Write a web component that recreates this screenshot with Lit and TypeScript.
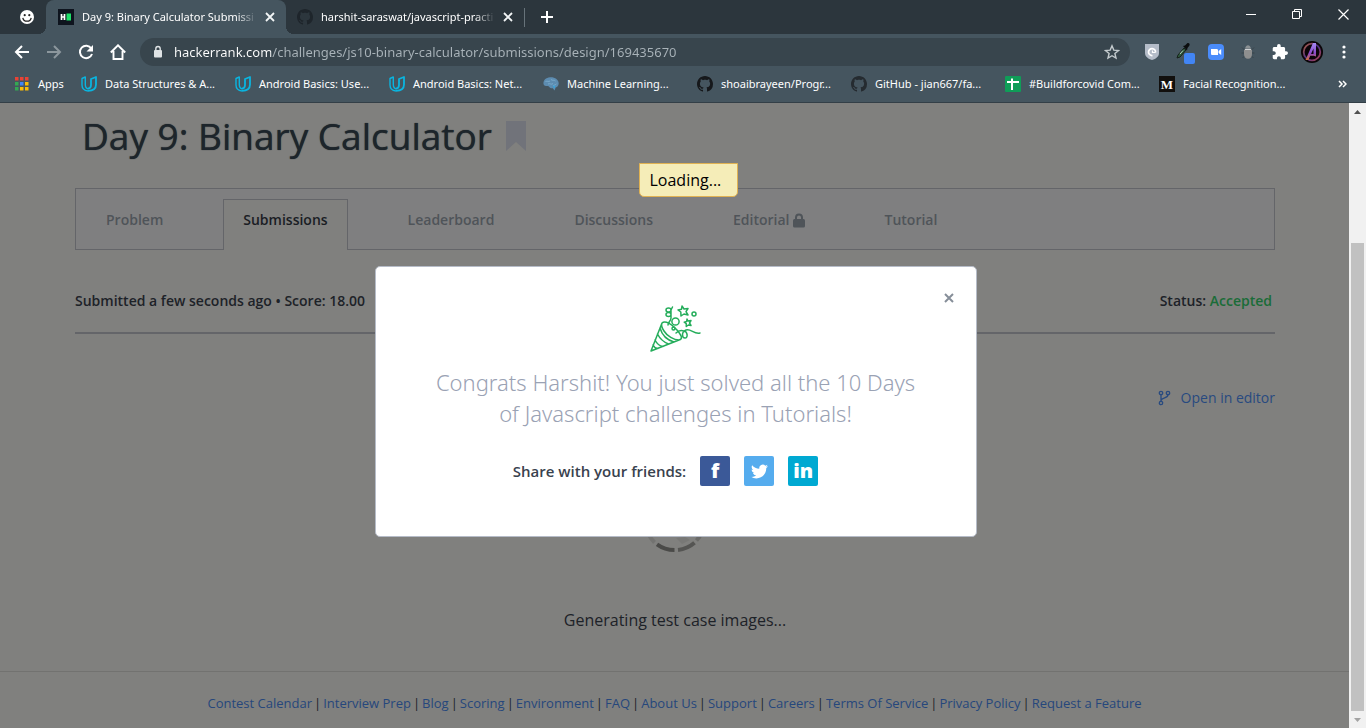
import { LitElement, html, css, svg } from "lit";
import { customElement } from "lit/decorators.js";

const GITHUB =
  "M8 0C3.58 0 0 3.58 0 8c0 3.54 2.29 6.53 5.47 7.59.4.07.55-.17.55-.38 0-.19-.01-.82-.01-1.49-2.01.37-2.53-.49-2.69-.94-.09-.23-.48-.94-.82-1.13-.28-.15-.68-.52-.01-.53.63-.01 1.08.58 1.23.82.72 1.21 1.87.87 2.33.66.07-.52.28-.87.51-1.07-1.78-.2-3.64-.89-3.64-3.95 0-.87.31-1.59.82-2.15-.08-.2-.36-1.02.08-2.12 0 0 .67-.21 2.2.82.64-.18 1.32-.27 2-.27s1.36.09 2 .27c1.53-1.04 2.2-.82 2.2-.82.44 1.1.16 1.92.08 2.12.51.56.82 1.27.82 2.15 0 3.07-1.87 3.75-3.65 3.95.29.25.54.73.54 1.48 0 1.07-.01 1.93-.01 2.2 0 .21.15.46.55.38A8.01 8.01 0 0 0 16 8c0-4.42-3.58-8-8-8z";

const github = (fill: string) =>
  html`<svg width="16" height="16" viewBox="0 0 16 16" aria-hidden="true"><path fill=${fill} d=${GITHUB} /></svg>`;

const udacity = html`<svg width="16" height="16" viewBox="0 0 16 16" aria-hidden="true">
  <path d="M7 15C3 14.500 1 12.500 1 9V2.500L4.300 1v7.500c0 2.500 1 4 3 4.500" fill="none" stroke="#0ab5e0" stroke-width="1.400" stroke-linejoin="round" />
  <path d="M7 12.700c2.200-.3 3-1.700 3-3.700V3l5-2v7.500c0 3.800-2.500 6.200-8 6.400" fill="none" stroke="#0ab5e0" stroke-width="1.800" stroke-linejoin="round" />
</svg>`;

const brain = html`<svg width="16" height="16" viewBox="0 0 16 16" aria-hidden="true">
  <path d="M.5 8C0 4.500 3 1.500 7 1.300c5-.3 8.700 2.500 8.700 6 0 2.400-1.200 3.800-3 4.200l-1.200 3-1.700-2.300C6 12.500 6.500 10 4.500 10 2.500 10 .8 9.700.5 8z" fill="#5d8cb0" />
  <path d="M2.500 5.500c2-.8 3 .6 4.500-.5M5 8c2-1 3 1 5-.4M8 3.500c1.500 1.500 3 0 4.500 1.500M10 10c1-1.500 2.500-.5 3.500-2.300" fill="none" stroke="#7fb0d0" stroke-width=".8" />
  <path d="M9.500 9.500l2 3 .8-2.500z" fill="#35a5dc" />
</svg>`;

const sheets = html`<svg width="16" height="16" viewBox="0 0 16 16" aria-hidden="true">
  <rect width="16" height="16" rx="1" fill="#0f9d58" />
  <path d="M2 6h12M7 2.500v11.500" stroke="#fff" stroke-width="2" />
</svg>`;

const medium = html`<svg width="16" height="16" viewBox="0 0 16 16" aria-hidden="true">
  <rect width="16" height="16" fill="#12100e" />
  <text x="8" y="12.500" text-anchor="middle" font-family="Liberation Serif, serif" font-weight="700" font-size="13" fill="#fff">M</text>
</svg>`;

const BOOKMARKS = [
  { icon: udacity, label: "Data Structures & A..." },
  { icon: udacity, label: "Android Basics: Use..." },
  { icon: udacity, label: "Android Basics: Net..." },
  { icon: brain, label: "Machine Learning..." },
  { icon: github("#16181b"), label: "shoaibrayeen/Progr..." },
  { icon: github("#252b30"), label: "GitHub - jian667/fa..." },
  { icon: sheets, label: "#Buildforcovid Com..." },
  { icon: medium, label: "Facial Recognition..." },
];

const closeGlyph = html`<svg width="10" height="10" viewBox="0 0 10 10" aria-hidden="true"><path d="M1 1l8 8M9 1l-8 8" stroke="#f2f5f6" stroke-width="1.800" /></svg>`;

@customElement("browser-chrome")
export class BrowserChrome extends LitElement {
  static styles = css`
    :host { display: block; font: 11px/16px "Noto Sans", "Open Sans", sans-serif; color: #fff; background: #45555f; border-bottom: 1px solid #333f47; }
    button { appearance: none; border: 0; background: none; padding: 0; color: inherit; font: inherit; display: grid; place-items: center; flex: none; }
    a { color: inherit; text-decoration: none; }
    svg { display: block; flex: none; }
    .strip { display: flex; height: 34px; background: #2c363d; }
    .pinned { width: 46px; padding-left: 8px; display: grid; place-items: center; box-sizing: border-box; }
    .tab { position: relative; width: 240px; box-sizing: border-box; padding: 0 11px 0 12px; display: flex; align-items: center; gap: 8px; }
    .tab.active { background: #45555f; border-radius: 8px 8px 0 0; }
    .tab.active::before, .tab.active::after { content: ""; position: absolute; bottom: 0; width: 8px; height: 8px; }
    .tab.active::before { right: 100%; background: radial-gradient(circle at 0 0, transparent 8px, #45555f 8px); }
    .tab.active::after { left: 100%; background: radial-gradient(circle at 100% 0, transparent 8px, #45555f 8px); }
    .title { flex: 1; min-width: 0; white-space: nowrap; mask-image: linear-gradient(to right, #000 88%, transparent); -webkit-mask-image: linear-gradient(to right, #000 88%, transparent); }
    .second { padding-left: 11px; width: 238px; }
    .divider { width: 1px; height: 19px; margin-top: 8px; background: #67737a; }
    .plus { width: 44px; }
    .window { margin-left: auto; display: flex; height: 28px; }
    .window button { width: 46px; }
    .toolbar { display: flex; align-items: center; padding: 4px 6px; }
    .tool { width: 32px; height: 28px; }
    .omnibox { flex: 1; min-width: 0; display: flex; align-items: center; height: 28px; border-radius: 14px; background: #38454d; margin: 0 6px; padding: 0 10px 0 12px; gap: 10px; }
    .url { flex: 1; min-width: 0; border: 0; outline: 0; padding: 0; height: 20px; font: 13px/20px "Noto Sans", "Open Sans", sans-serif; color: transparent; background: linear-gradient(to right, #fff 97px, #a9b3b9 97px); -webkit-background-clip: text; background-clip: text; }
    .bookmarks { display: flex; align-items: center; height: 28px; padding: 0 19px 4px 15px; overflow: hidden; }
    .bookmark { display: flex; align-items: center; gap: 8px; width: 154px; white-space: nowrap; flex: none; }
    .bookmark.apps { width: 66px; gap: 9px; }
    .more { margin-left: auto; }
  `;
  render() {
    const dots = ["#ea4335", "#ea4335", "#ea4335", "#34a853", "#4285f4", "#fbbc05", "#34a853", "#fbbc05", "#fbbc05"];
    return html`
      <div class="strip">
        <div class="pinned">
          <svg width="14" height="14" viewBox="0 0 14 14" aria-hidden="true"><circle cx="7" cy="7" r="7" fill="#fff" /><circle cx="4.700" cy="5.200" r="1.100" fill="#222" /><circle cx="9.300" cy="5.200" r="1.100" fill="#222" /><path d="M2.800 7.800a4.300 4.300 0 0 0 8.400 0" fill="none" stroke="#222" stroke-width="1.300" /></svg>
        </div>
        <div class="tab active">
          <svg width="16" height="16" viewBox="0 0 16 16" aria-hidden="true"><rect width="16" height="16" fill="#0e141e" /><path d="M3.500 5v6M6.500 5v6M3 8h4" stroke="#fff" stroke-width="1.700" /><rect x="8.500" y="4.500" width="4.500" height="7" fill="#1fe06a" /></svg>
          <span class="title">Day 9: Binary Calculator Submissi</span>
          <button aria-label="Close tab">${closeGlyph}</button>
        </div>
        <div class="tab second">
          ${github("#1e252b")}
          <span class="title">harshit-saraswat/javascript-practi</span>
          <button aria-label="Close tab">${closeGlyph}</button>
        </div>
        <span class="divider"></span>
        <button class="plus" aria-label="New tab"><svg width="12" height="12" viewBox="0 0 12 12"><path d="M6 0v12M0 6h12" stroke="#fff" stroke-width="2" /></svg></button>
        <div class="window">
          <button aria-label="Minimize"><svg width="10" height="10" viewBox="0 0 10 10"><path d="M0 5.500h10" stroke="#fff" /></svg></button>
          <button aria-label="Restore"><svg width="10" height="10" viewBox="0 0 10 10"><path d="M.5 2.500h7v7h-7zM2.500 2.500v-2h7v7h-2" fill="none" stroke="#fff" /></svg></button>
          <button aria-label="Close"><svg width="11" height="11" viewBox="0 0 11 11"><path d="M.5.5l10 10M10.500.5l-10 10" stroke="#fff" stroke-width="1.200" /></svg></button>
        </div>
      </div>
      <div class="toolbar">
        <button class="tool" aria-label="Back"><svg width="16" height="16" viewBox="0 0 16 16"><path d="M15 8H2M8 2L2 8l6 6" fill="none" stroke="#fff" stroke-width="2" /></svg></button>
        <button class="tool" aria-label="Forward"><svg width="16" height="16" viewBox="0 0 16 16"><path d="M1 8h13M8 2l6 6-6 6" fill="none" stroke="#8c979d" stroke-width="2" /></svg></button>
        <button class="tool" aria-label="Reload"><svg width="16" height="16" viewBox="0 0 16 16"><path d="M13.300 4.500A6.200 6.200 0 1 0 14 10" fill="none" stroke="#fff" stroke-width="2" /><path d="M15 1v6.500H8.500z" fill="#fff" /></svg></button>
        <button class="tool" aria-label="Home"><svg width="16" height="16" viewBox="0 0 16 16"><path d="M.8 8.500L8 1.300l7.200 7.200M3.500 7v8h9V7" fill="none" stroke="#fff" stroke-width="1.900" /></svg></button>
        <div class="omnibox">
          <svg width="12" height="14" viewBox="0 0 12 14" aria-hidden="true"><rect x="2" y="5" width="8" height="7.500" rx="1" fill="#dfe3e5" /><path d="M3.800 5.500V3.700a2.200 2.200 0 0 1 4.400 0v1.800" fill="none" stroke="#dfe3e5" stroke-width="1.400" /></svg>
          <input class="url" aria-label="Address" spellcheck="false" value="hackerrank.com/challenges/js10-binary-calculator/submissions/design/169435670" />
          <button aria-label="Bookmark this page"><svg width="16" height="16" viewBox="0 0 16 16"><path d="M8 1.800l1.800 4.300 4.700.4-3.600 3 1.100 4.600L8 11.700l-4 2.400 1.100-4.600-3.600-3 4.700-.4z" fill="none" stroke="#c3cacd" stroke-width="1.400" /></svg></button>
        </div>
        <button class="tool" aria-label="Shield"><svg width="14" height="16" viewBox="0 0 14 16"><path d="M0 0h14v9c0 3.500-3 5.800-7 7-4-1.200-7-3.500-7-7z" fill="#b4bcc8" /><path d="M10.500 8.500a3.500 3.500 0 1 0-3 3" fill="none" stroke="#fff" stroke-width="1.700" /><path d="M10.500 8.500H7.500V6.500" fill="none" stroke="#fff" stroke-width="1.200" /></svg></button>
        <button class="tool" aria-label="Colour picker"><svg width="22" height="24" viewBox="0 0 22 24"><path d="M4 18l1-3 6-7 2 2-6 7z" fill="#2f5a3e" stroke="#16211a" /><path d="M7 14l3-3.500" stroke="#b9d6bf" /><path d="M10 6l2-.5L14 3.500c1.500-1.200 3.500.5 2.300 2.200L14.500 8l-.5 2.500z" fill="#0b0d0e" /><rect x="11" y="13" width="11" height="11" rx="2" fill="#4285f4" /></svg></button>
        <button class="tool" aria-label="Video meeting"><svg width="16" height="16" viewBox="0 0 16 16"><rect width="16" height="16" rx="4" fill="#4a8cfb" /><path d="M3 5h5.500c1 0 1.500.5 1.500 1.500V11H4.500C3.500 11 3 10.500 3 9.500zM10.600 7.100L13.200 5v6l-2.600-2z" fill="#fff" /></svg></button>
        <button class="tool" aria-label="Debugger"><svg width="16" height="16" viewBox="0 0 16 16"><path d="M2 3.500l3 3M14 3.500l-3 3M1.500 9H4M14.500 9H12M2.500 14l2-2M13.500 14l-2-2" stroke="#39444a" stroke-width="1" /><path d="M5.200 4.800C5.200 0 10.800 0 10.800 4.800z" fill="#8b9194" /><path d="M4 6h8v4c0 3-1.500 4.800-4 4.800S4 13 4 10z" fill="#8e8f8f" /><path d="M4.800 5.500h6.400" stroke="#d0d2d3" /></svg></button>
        <button class="tool" aria-label="Extensions"><svg width="16" height="16" viewBox="1 1 22 22"><path d="M20.500 11H19V7c0-1.100-.9-2-2-2h-4V3.500a2.500 2.500 0 0 0-5 0V5H4c-1.100 0-1.990.9-1.990 2v3.800H3.500c1.490 0 2.700 1.210 2.700 2.700s-1.210 2.700-2.700 2.700H2V20c0 1.100.9 2 2 2h3.800v-1.500c0-1.490 1.210-2.700 2.700-2.700s2.700 1.210 2.700 2.700V22H17c1.100 0 2-.9 2-2v-4h1.500a2.500 2.500 0 0 0 0-5z" fill="#fff" /></svg></button>
        <button class="tool" aria-label="Profile"><svg width="22" height="22" viewBox="0 0 22 22"><defs><linearGradient id="glow" x2="1" y2="1"><stop stop-color="#b3603f" /><stop offset=".5" stop-color="#4a3088" /><stop offset="1" stop-color="#b04450" /></linearGradient><linearGradient id="mark" y2="1" x2="0"><stop stop-color="#a58af5" /><stop offset=".6" stop-color="#8a48c8" /><stop offset="1" stop-color="#d0703a" /></linearGradient></defs><circle cx="11" cy="11" r="11" fill="#0b0508" /><circle cx="11" cy="11" r="8.300" fill="none" stroke="url(#glow)" stroke-width="1.800" /><path d="M4.500 19L12 2h3v13l-2.500-1.800V7.500L10 13h3l2-1.500v4l-2.200-.7H9.200L7.500 19z" fill="url(#mark)" /></svg></button>
        <button class="tool" aria-label="Menu"><svg width="4" height="14" viewBox="0 0 4 14"><circle cx="2" cy="2" r="1.600" fill="#fff" /><circle cx="2" cy="7" r="1.600" fill="#fff" /><circle cx="2" cy="12" r="1.600" fill="#fff" /></svg></button>
      </div>
      <nav class="bookmarks">
        <a class="bookmark apps" href="#"><svg width="14" height="14" viewBox="0 0 14 14" aria-hidden="true">${dots.map((c, i) => svg`<rect x=${(i % 3) * 5} y=${Math.floor(i / 3) * 5} width="3.500" height="3.500" fill=${c} />`)}</svg>Apps</a>
        ${BOOKMARKS.map((b) => html`<a class="bookmark" href="#">${b.icon}<span>${b.label}</span></a>`)}
        <button class="more" aria-label="More bookmarks"><svg width="9" height="8" viewBox="0 0 9 8"><path d="M1 1l3 3-3 3M5 1l3 3-3 3" fill="none" stroke="#fff" stroke-width="1.500" /></svg></button>
      </nav>
    `;
  }
}

@customElement("share-dialog")
export class ShareDialog extends LitElement {
  static styles = css`
    :host { display: block; width: 602px; max-width: 100%; }
    .dialog { position: relative; box-sizing: border-box; background: #fff; border: 1px solid #b6bcc8; border-radius: 5px; padding: 38px 52px 50px; text-align: center; font-family: "Open Sans", "Noto Sans", sans-serif; }
    button { appearance: none; border: 0; padding: 0; background: none; }
    .close { position: absolute; top: 26px; right: 22px; width: 10px; height: 10px; }
    svg { display: block; }
    .party { margin: 0 auto; }
    .message { margin: 14px 0 27px; font-family: "Noto Sans", "Open Sans", sans-serif; font-size: 22px; line-height: 31px; font-weight: 300; color: #9aa2b4; }
    .share { display: flex; align-items: center; justify-content: center; gap: 14px; padding-right: 20px; font-size: 15px; line-height: 20px; font-weight: 600; color: #39424e; }
    .net { width: 30px; height: 30px; border-radius: 2px; color: #fff; display: grid; place-items: center; text-decoration: none; font: 800 20px/30px "Open Sans", sans-serif; }
    .facebook { background: #3b5998; }
    .twitter { background: #55acee; }
    .linkedin { background: #00a9d2; }
  `;
  render() {
    return html`
      <section class="dialog" role="dialog" aria-label="Congratulations">
        <button class="close" aria-label="Close"><svg width="10" height="10" viewBox="0 0 10 10"><path d="M1 1l8 8M9 1L1 9" stroke="#868e99" stroke-width="2" /></svg></button>
        <svg class="party" width="52" height="48" viewBox="0 0 52 48" fill="none" stroke="#25ad5b" stroke-width="1.500" stroke-linecap="round" stroke-linejoin="round" aria-hidden="true">
          <path d="M12 18L1 46l28-11M12 18c3-3 10 1 15 7s6 9 2 10c-5 0-12-4-15-9-2-3-3-6-2-8zM10 23c2 7 7 12 14 14M7.500 29c2 4 6 8 11 10M5 35c1.500 3 5 6 8 6.500M3 40c1 2 3 3.500 5 3.500" />
          <path d="M18 20c0-3 3-4 3-7M21 9.500c0-2.700-5-2.700-5 0s5 2.700 5 0V13M21 9.500V5M21 5c0-2.700-5-2.700-5 0s5 2.700 5 0l1.500-3" />
          <circle cx="25.500" cy="16.500" r="3.600" /><circle cx="23.500" cy="23.500" r="1.500" />
          <path d="M26 28c2-2 5-3 8-2 4 1 4 7 1 7s-4-6 1-8c5-1.500 8 4.500 14 3" />
          <path d="M32 1l2 3 4-.5-2 3.200L38 10l-4-1-3 2-.2-4L28 5l3.500-.8zM37 14l1 2 3-.5-1.500 2.500L41 20.500l-2.700-.5-2 1.500-.1-3-2-1.300 2.500-.8z" />
          <circle cx="44" cy="9" r="2" />
        </svg>
        <p class="message">Congrats Harshit! You just solved all the 10 Days of Javascript challenges in Tutorials!</p>
        <div class="share">
          <span>Share with your friends:</span>
          <a class="net facebook" href="#" aria-label="Share on Facebook">f</a>
          <a class="net twitter" href="#" aria-label="Share on Twitter"><svg width="17" height="17" viewBox="0 0 24 24"><path fill="#fff" d="M23.950 4.570a10 10 0 0 1-2.820.770 4.960 4.960 0 0 0 2.160-2.720c-.95.550-2 .950-3.120 1.180a4.920 4.920 0 0 0-8.380 4.480C7.690 8.090 4.070 6.130 1.640 3.160a4.820 4.820 0 0 0-.670 2.480c0 1.710.870 3.210 2.190 4.100a4.900 4.900 0 0 1-2.230-.620v.060a4.920 4.920 0 0 0 3.950 4.830 5 5 0 0 1-2.210.080 4.940 4.940 0 0 0 4.600 3.420A9.870 9.870 0 0 1 0 19.540a13.990 13.990 0 0 0 7.550 2.210c9.050 0 14-7.500 14-13.980 0-.210 0-.420-.020-.630a9.940 9.940 0 0 0 2.460-2.550z" /></svg></a>
          <a class="net linkedin" href="#" aria-label="Share on LinkedIn">in</a>
        </div>
      </section>
    `;
  }
}

const FOOTER = ["Contest Calendar", "Interview Prep", "Blog", "Scoring", "Environment", "FAQ", "About Us", "Support", "Careers", "Terms Of Service", "Privacy Policy", "Request a Feature"];
const TABS = ["Problem", "Submissions", "Leaderboard", "Discussions", "Editorial", "Tutorial"];

@customElement("app-root")
export class AppRoot extends LitElement {
  static styles = css`
    :host { display: flex; flex-direction: column; min-height: 100vh; background: #80807e; font-family: "Open Sans", "Noto Sans", sans-serif; color: #1d2228; }
    a { color: inherit; text-decoration: none; }
    svg { display: block; flex: none; }
    .view { flex: 1; display: flex; align-items: stretch; }
    .page { position: relative; flex: 1; min-width: 0; display: flex; flex-direction: column; }
    .content { padding: 8px 74px 0 75px; display: flex; flex-direction: column; }
    .heading { display: flex; align-items: center; gap: 14px; padding-left: 7px; }
    h1 { margin: 0; font-size: 37px; line-height: 50px; font-weight: 500; color: #1d252b; text-shadow: 0 0 1px #1d252b; }
    .tabs { display: flex; align-items: flex-end; gap: 40px; height: 60px; margin-top: 27px; padding-left: 10px; border: 1px solid #646569; background: #7f7f80; }
    .tab { display: flex; align-items: center; gap: 3px; height: 50px; padding: 0 20px 9px; box-sizing: border-box; font-size: 14px; line-height: 20px; font-weight: 600; color: #4f5459; border: 1px solid transparent; border-width: 1px 0 0; }
    .tab.active { height: 51px; margin-bottom: -1px; padding: 0 19px 10px; border: 1px solid #646569; border-bottom: 0; background: #80807e; color: #1a1d24; }
    .summary { display: flex; justify-content: space-between; margin-top: 41px; padding: 0 3px 21px 0; border-bottom: 2px solid #646569; font-size: 14px; line-height: 20px; font-weight: 600; }
    .accepted { color: #1a6c38; }
    .editor { align-self: flex-end; display: flex; align-items: center; gap: 10px; margin-top: 54px; font-size: 14px; line-height: 20px; color: #284a80; }
    .progress { display: flex; flex-direction: column; align-items: center; margin-top: 80px; gap: 58px; font-size: 16px; line-height: 20px; padding-bottom: 41px; }
    footer { border-top: 1px solid #727270; padding: 21px 20px 15px; text-align: center; font-size: 13px; line-height: 20px; }
    footer a { color: #26477c; }
    .bar { margin: 0 2px; }
    .overlay { position: absolute; inset: 0; display: flex; justify-content: center; align-items: flex-start; padding: 163px 0 0 2px; }
    .loading { position: absolute; top: 60px; left: calc(50% - 36px); box-sizing: border-box; height: 34px; padding: 0 16px 0 10px; border: 1px solid #e0b252; border-radius: 0 0 5px 5px; background: #f5edb8; color: #000; font-size: 16px; line-height: 32px; }
    .scroll { width: 17px; background: #f1f1f1; display: flex; flex-direction: column; align-items: stretch; }
    .arrow { height: 17px; display: grid; place-items: center; }
    .before { flex: 123; }
    .thumb { flex: 468; margin: 0 2px; background: #c1c1c1; }
  `;
  render() {
    const lock = html`<svg width="12" height="15" viewBox="0 0 12 15" aria-hidden="true"><rect y="6" width="12" height="8.500" rx="1.500" fill="#4f5459" /><path d="M3 7V4.500a3 3 0 0 1 6 0V7" fill="none" stroke="#4f5459" stroke-width="2" /></svg>`;
    return html`
      <browser-chrome></browser-chrome>
      <div class="view">
        <main class="page">
          <div class="content">
            <div class="heading">
              <h1>Day 9: Binary Calculator</h1>
              <svg width="20" height="30" viewBox="0 0 20 30" aria-hidden="true"><path d="M0 0h20v30L10 21 0 30z" fill="#71737a" /></svg>
            </div>
            <nav class="tabs">
              ${TABS.map((t) => html`<a class=${t === "Submissions" ? "tab active" : "tab"} href="#">${t}${t === "Editorial" ? lock : ""}</a>`)}
            </nav>
            <div class="summary">
              <span>Submitted a few seconds ago • Score: 18.00</span>
              <span>Status: <span class="accepted">Accepted</span></span>
            </div>
            <a class="editor" href="#">
              <svg width="13" height="16" viewBox="0 0 13 16" fill="none" stroke="#284a80" stroke-width="1.300" aria-hidden="true"><circle cx="3" cy="3" r="1.700" /><circle cx="3" cy="13" r="1.700" /><circle cx="10" cy="3" r="1.700" /><path d="M3 4.700v6.600M10 4.700C10 8.500 4 7 3 10.500" /></svg>
              <span>Open in editor</span>
            </a>
            <div class="progress">
              <svg width="64" height="64" viewBox="0 0 64 64" fill="none" stroke-width="4" aria-hidden="true">
                <path d="M31.500 62A30 30 0 0 1 14 56.300" stroke="#4a4a48" />
                <path d="M35 61.900A30 30 0 0 0 51.500 54.700" stroke="#555553" />
                <path d="M11.500 54.500A30 30 0 0 1 5 45" stroke="#737371" />
                <path d="M53.500 52.500A30 30 0 0 0 59 44" stroke="#6a6a68" />
                <path d="M33 50l9-1 5 3-8 4z" fill="#787876" />
              </svg>
              <span>Generating test case images...</span>
            </div>
          </div>
          <footer>${FOOTER.map((f, i) => html`${i ? html`<span class="bar">|</span><wbr />` : ""}<a href="#">${f}</a>`)}</footer>
          <div class="overlay"><share-dialog></share-dialog></div>
          <div class="loading" role="status">Loading...</div>
        </main>
        <div class="scroll" aria-hidden="true">
          <span class="arrow"><svg width="7" height="4" viewBox="0 0 7 4"><path d="M0 4L3.500 0 7 4z" fill="#505050" /></svg></span>
          <span class="before"></span>
          <span class="thumb"></span>
          <span class="arrow"><svg width="7" height="4" viewBox="0 0 7 4"><path d="M0 0L3.500 4 7 0z" fill="#a3a3a3" /></svg></span>
        </div>
      </div>
    `;
  }
}
